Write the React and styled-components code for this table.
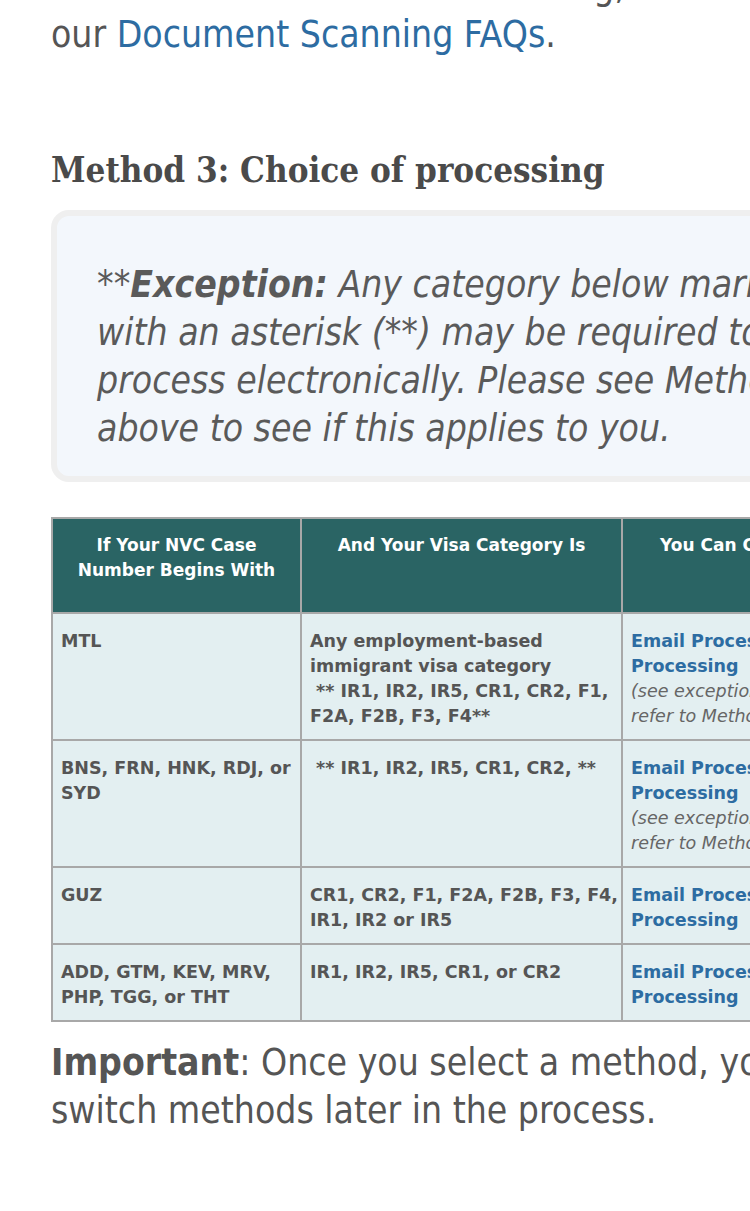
import React from "react";
import styled, { createGlobalStyle } from "styled-components";

const Global = createGlobalStyle`
  html, body { margin: 0; padding: 0; background: #ffffff; }
  body { width: 750px; overflow: hidden; }
  #root { width: 750px; overflow: hidden; }
`;

const Page = styled.div`
  width: 1000px;
  padding: 0 0 60px 51px;
  margin-top: -37px;
  font-family: "DejaVu Sans Condensed", "DejaVu Sans", sans-serif;
  color: #555555;
`;

const Para = styled.p`
  margin: 0;
  font-size: 37px;
  line-height: 48px;
  color: #555555;
  white-space: nowrap;
`;

const Link = styled.a`
  color: #2d6ca2;
  text-decoration: none;
`;

const Heading = styled.h2`
  margin: 89px 0 0 0;
  font-family: "DejaVu Serif Condensed", "DejaVu Serif", serif;
  font-weight: bold;
  font-size: 34.7px;
  line-height: 44px;
  color: #4a4a4a;
`;

const Callout = styled.div`
  margin-top: 18px;
  border: 6px solid #efefef;
  border-radius: 18px;
  background: #f3f7fc;
  padding: 45px 40px 23px 40px;
`;

const CalloutText = styled.p`
  margin: 0;
  font-style: italic;
  font-size: 37px;
  line-height: 48px;
  color: #5a5a5a;
  white-space: nowrap;
`;

const Table = styled.table`
  margin-top: 35px;
  border-collapse: collapse;
  font-family: "DejaVu Sans", Verdana, sans-serif;
  table-layout: fixed;
  width: 940px;
`;

const Col = styled.col`
  width: ${(p) => p.$w}px;
`;

const HeadRow = styled.tr`
  height: 95px;
`;

const Th = styled.th`
  background: #2a6464;
  color: #ffffff;
  font-size: 17px;
  line-height: 25px;
  font-weight: bold;
  text-align: center;
  vertical-align: top;
  padding: 14px 10px 4px 10px;
  border: 2px solid #a8a8a8;
`;

const Td = styled.td`
  background: #e3eff1;
  color: #555555;
  font-size: 17.5px;
  line-height: 25px;
  font-weight: bold;
  text-align: left;
  vertical-align: top;
  padding: 15px 2px 10px 8px;
  border: 2px solid #a8a8a8;
`;

const CellLink = styled.span`
  color: #2d6ca2;
  font-weight: bold;
`;

const Note = styled.span`
  display: block;
  font-style: italic;
  font-weight: normal;
  color: #666666;
`;

const Important = styled.p`
  margin: 17px 0 0 0;
  font-size: 37px;
  line-height: 48px;
  color: #555555;
  white-space: nowrap;
`;

const Strong = styled.strong`
  font-weight: bold;
`;

const rows = [
  {
    code: "MTL",
    cat: (
      <>
        Any employment-based immigrant visa category
        <br />
        &nbsp;** IR1, IR2, IR5, CR1, CR2, F1, F2A, F2B, F3, F4**
      </>
    ),
    note: true,
  },
  {
    code: "BNS, FRN, HNK, RDJ, or SYD",
    cat: <>&nbsp;** IR1, IR2, IR5, CR1, CR2, **</>,
    note: true,
  },
  { code: "GUZ", cat: "CR1, CR2, F1, F2A, F2B, F3, F4, IR1, IR2 or IR5", note: false },
  { code: "ADD, GTM, KEV, MRV, PHP, TGG, or THT", cat: "IR1, IR2, IR5, CR1, or CR2", note: false },
];

export default function App() {
  return (
    <>
      <Global />
      <Page>
        <Para>
          For more information on scanning, see
          <br />
          our <Link href="#">Document Scanning FAQs</Link>.
        </Para>
        <Heading>Method 3: Choice of processing</Heading>
        <Callout>
          <CalloutText>
            **<Strong>Exception:</Strong> Any category below marked
            <br />
            with an asterisk (**) may be required to
            <br />
            process electronically. Please see Method 2
            <br />
            above to see if this applies to you.
          </CalloutText>
        </Callout>
        <Table>
          <colgroup>
            <Col $w={249} />
            <Col $w={321} />
            <Col $w={370} />
          </colgroup>
          <thead>
            <HeadRow>
              <Th>If Your NVC Case Number Begins With</Th>
              <Th>And Your Visa Category Is</Th>
              <Th>You Can Choose Either Method</Th>
            </HeadRow>
          </thead>
          <tbody>
            {rows.map((r) => (
              <tr key={r.code}>
                <Td>{r.code}</Td>
                <Td>{r.cat}</Td>
                <Td>
                  <CellLink>Email Processing or Scanning Processing</CellLink>
                  {r.note && (
                    <Note>
                      (see exception above and
                      <br />
                      refer to Method 2)
                    </Note>
                  )}
                </Td>
              </tr>
            ))}
          </tbody>
        </Table>
        <Important>
          <Strong>Important</Strong>: Once you select a method, you cannot
          <br />
          switch methods later in the process.
        </Important>
      </Page>
    </>
  );
}
